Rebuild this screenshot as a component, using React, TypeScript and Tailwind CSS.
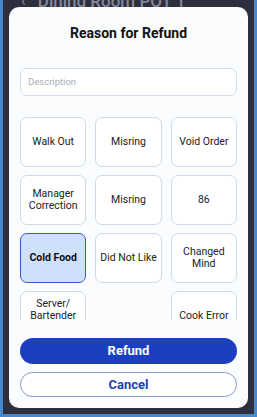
import React from "react";

const reasons: { label: string; selected?: boolean; empty?: boolean; lift?: boolean }[] = [
  { label: "Walk Out" },
  { label: "Misring" },
  { label: "Void Order" },
  { label: "Manager Correction" },
  { label: "Misring" },
  { label: "86" },
  { label: "Cold Food", selected: true },
  { label: "Did Not Like" },
  { label: "Changed Mind" },
  { label: "Server/ Bartender", lift: true },
  { label: "", empty: true },
  { label: "Cook Error" },
];

export default function App() {
  return (
    <div
      className="w-[257px] h-[417px] bg-[#4a88cd] px-[3px] pb-[3px] overflow-hidden"
      style={{ fontFamily: "Roboto, 'Liberation Sans', sans-serif" }}
    >
      <div className="h-full bg-[#2d2f3e] flex flex-col">
        {/* page header behind the modal */}
        <div className="h-[7px] overflow-hidden flex items-end pl-[18px] gap-[12px] text-[#85879a]">
          <span className="text-[16px] leading-[16px] mb-[-2px]">‹</span>
          <span className="text-[17px] leading-[17px] font-medium mb-[-3px]">Dining Room POT 1</span>
        </div>

        {/* Modal */}
        <div className="relative mx-[6px] h-[401px] rounded-[10px] bg-[#fbfcfd] px-[11px] pb-[11px] flex flex-col">
          <h2 className="text-[14px] font-bold text-[#111] text-center mt-[17px] leading-[18px]">
            Reason for Refund
          </h2>

          <div className="mt-[26px] h-[28px] rounded-[7px] border border-[#d3dde8] bg-white flex items-center px-[7px]">
            <span className="text-[9.5px] text-[#a9adb5]">Description</span>
          </div>

          <div className="mt-[21px] h-[203px] overflow-hidden">
            <div className="grid grid-cols-3 gap-x-[9px] gap-y-[8px]">
              {reasons.map((r, i) =>
                r.empty ? (
                  <div key={i} />
                ) : (
                  <div
                    key={i}
                    className={`h-[50px] rounded-[7px] border-[1.5px] flex items-center justify-center text-center px-0.5 text-[10.5px] leading-[12px] ${
                      r.lift ? "pb-[12px]" : ""
                    } ${
                      r.selected
                        ? "bg-[#cfe0fb] border-[#3a5cc0] font-bold text-[#111]"
                        : "bg-white border-[#cfdae6] text-[#222]"
                    }`}
                  >
                    {r.label}
                  </div>
                )
              )}
            </div>
          </div>

          <button className="mt-[18px] h-[26px] rounded-full bg-[#1c3ec1] text-white text-[13px] font-bold">
            Refund
          </button>
          <button className="mt-[8px] h-[25px] rounded-full border border-[#8b9ad0] bg-white text-[#1f3fae] text-[13px] font-bold">
            Cancel
          </button>
        </div>
      </div>
    </div>
  );
}
